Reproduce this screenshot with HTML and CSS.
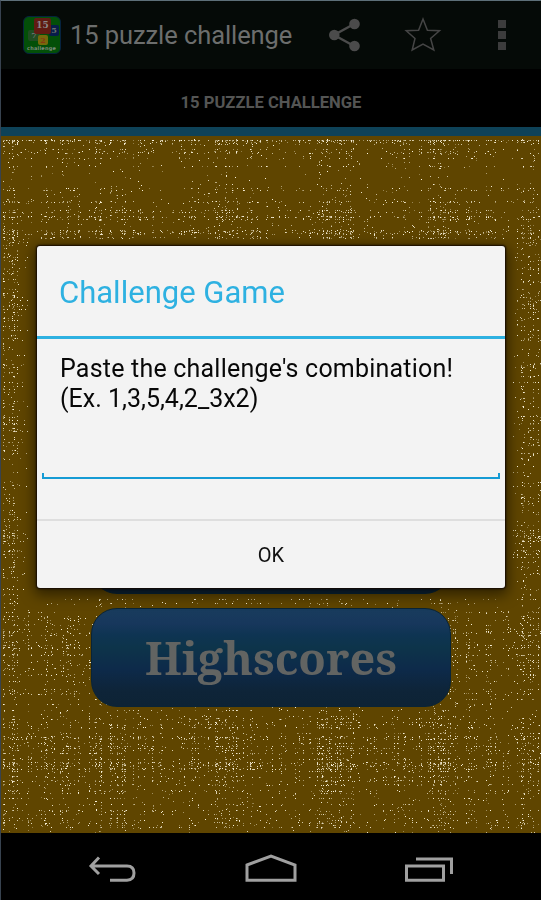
FILE: index.html
```
<!DOCTYPE html>
<html lang="en">

<head>
  <meta charset="UTF-8">
  <title>15 puzzle challenge</title>
  <meta name="viewport" content="width=device-width, initial-scale=1">
  <link rel="stylesheet" href="styles.css">
</head>

<body>
  <div class="screen">
    <header>
      <div class="app-icon">
        <span class="tile green">7</span>
        <span class="tile blue">5</span>
        <span class="tile yellow">2</span>
        <span class="tile red">15</span>
        <span class="icon-label">challenge</span>
      </div>
      <div class="app-title">15 puzzle challenge</div>
      <svg class="share" width="32" height="34" viewBox="0 0 32 34">
        <path d="M26 5.500L5 17L26 28.500" fill="none" stroke="#4b4b4b" stroke-width="2.400" />
        <g fill="#4b4b4b">
          <circle cx="25.500" cy="6" r="5.300" />
          <circle cx="5.300" cy="17" r="5.300" />
          <circle cx="25.500" cy="28" r="5.300" />
        </g>
      </svg>
      <svg class="star" width="38" height="38" viewBox="0 0 38 38">
        <path d="M19 3L23.400 14.200L35.500 14.700L26.600 22.500L29.800 34L19 28L8.200 34L11 22.500L2.200 14.700L14.600 14.200Z" fill="none" stroke="#454545" stroke-width="1.500" />
      </svg>
      <div class="more"><i></i><i></i><i></i></div>
    </header>
    <div class="tab">15 PUZZLE CHALLENGE</div>
    <main>
      <canvas id="texture" width="540" height="697"></canvas>
      <div class="menu">
        <button class="menu-button"></button>
        <button class="menu-button">Highscores</button>
      </div>
    </main>
    <nav>
      <svg width="50" height="30" viewBox="0 0 50 30">
        <path d="M12 3.500L4 12L12 20M4 12H40Q47 12 47 19T40 26.300H23" />
      </svg>
      <svg width="54" height="30" viewBox="0 0 54 30">
        <path d="M3 11L27 2L51 11V26.300H3Z" />
      </svg>
      <svg width="50" height="30" viewBox="0 0 50 30">
        <path d="M2.500 12H39.500V26.300H2.500ZM12 5H47.500V20" />
      </svg>
    </nav>
  </div>

  <div class="dialog">
    <h1>Challenge Game</h1>
    <div class="dialog-body">
      <p class="first">Paste the challenge's combination!</p>
      <p>(Ex. 1,3,5,4,2_3x2)</p>
      <input type="text" id="combination">
    </div>
    <button class="ok">OK</button>
  </div>

  <script>
    const canvas = document.getElementById('texture');
    const ctx = canvas.getContext('2d');
    const period = 107;
    let seed = 15;

    function random() {
      seed = (seed * 1664525 + 1013904223) % 4294967296;
      return seed / 4294967296;
    }

    // Some threads of the weave are much brighter than others
    function threads(count, center) {
      const list = [];
      for (let i = 0; i < count; i++) {
        const wave = 0.5 + 0.5 * Math.cos((i - center) / period * Math.PI * 2);
        const bright = random() < 0.3 ? 2.2 : 0.3;
        list.push(bright * (0.6 + Math.pow(wave, 3) * 0.5));
      }
      return list;
    }

    const cols = threads(540, 7);
    const rows = threads(697, 84);
    rows[4] = 8;

    for (let y = 3; y < 697; y++) {
      for (let x = 2; x < 540; x++) {
        if (random() < rows[y] * cols[x] * 0.095) {
          ctx.fillStyle = 'rgba(255, 248, 225, ' + (0.3 + random() * 0.7) + ')';
          ctx.fillRect(x, y, 1, 1);
        }
      }
    }

    // Keep the dialog's shadow free of specks
    ctx.clearRect(27, 103, 485, 360);
  </script>
</body>

</html>
```
FILE: styles.css
```
body {
  margin: 0;
  font-family: Roboto, sans-serif;
  background: #000;
  overflow: hidden;
}

.screen {
  display: flex;
  flex-direction: column;
  box-sizing: border-box;
  width: 541px;
  height: 900px;
  border-top: 1px solid #5d6f78;
  border-left: 1px solid #37424f;
}

header {
  display: flex;
  align-items: center;
  box-sizing: border-box;
  height: 68px;
  padding-left: 22px;
  background: #050a07;
}

.app-icon {
  position: relative;
  box-sizing: border-box;
  width: 38px;
  height: 38px;
  border: 1px solid #06233f;
  border-radius: 6px;
  background: #034f08;
}

.tile {
  position: absolute;
  border-radius: 2px;
  font: bold 8px/11px "DejaVu Serif", serif;
  text-align: center;
  color: #67706a;
}

.tile.red {
  left: 10px;
  top: 1px;
  width: 17px;
  height: 16px;
  line-height: 15px;
  font-size: 9px;
  color: #888;
  background: #601b12;
}

.tile.blue {
  left: 25px;
  top: 8px;
  width: 10px;
  height: 11px;
  background: #071d4a;
}

.tile.green {
  left: 4px;
  top: 13px;
  width: 12px;
  height: 11px;
  background: #204c22;
}

.tile.yellow {
  left: 14px;
  top: 18px;
  width: 10px;
  height: 10px;
  line-height: 10px;
  color: #853a10;
  background: #75690b;
}

.icon-label {
  position: absolute;
  left: 3px;
  top: 28px;
  font: bold 5px/7px "DejaVu Sans", sans-serif;
  letter-spacing: 0.2px;
  color: #7d8a7d;
}

.app-title {
  width: 226px;
  margin-left: 9px;
  font-size: 25.5px;
  letter-spacing: -0.08px;
  white-space: nowrap;
  color: #6c6e6d;
}

.share {
  margin-left: 33px;
}

.star {
  margin-left: 43px;
}

.more {
  display: flex;
  flex-direction: column;
  gap: 3px;
  margin-left: 56px;
}

.more i {
  width: 8px;
  height: 8px;
  background: #3c3c3c;
}

.tab {
  height: 58px;
  border-bottom: 9px solid #0e4258;
  background: #000;
  color: #545554;
  font-size: 16.6px;
  font-weight: bold;
  line-height: 67px;
  text-align: center;
}

main {
  position: relative;
  height: 697px;
  background: #5f4500;
}

#texture {
  position: absolute;
  left: 0;
  top: 0;
}

.menu {
  position: relative;
  display: flex;
  flex-direction: column;
  align-items: center;
  gap: 14px;
  padding-top: 359px;
}

.menu-button {
  width: 360px;
  height: 99px;
  padding: 0;
  border: 1px solid #092437;
  border-radius: 26px;
  background: linear-gradient(#183c5d, #17375c 15%, #0e3452 27%, #0d344a 40%, #0d2a4a 62%, #0e2438 85%, #0d2335);
  color: #626462;
  font: bold 45px "Noto Serif", "DejaVu Serif Condensed", "DejaVu Serif", serif;
}

nav {
  display: flex;
  align-items: center;
  justify-content: space-between;
  height: 67px;
  padding: 4px 87px 0 86px;
  box-sizing: border-box;
}

nav path {
  fill: none;
  stroke: #a0a0a0;
  stroke-width: 3;
}

.dialog {
  position: absolute;
  left: 37px;
  top: 246px;
  width: 468px;
  height: 342px;
  border-radius: 3px;
  background: #f3f3f3;
  box-shadow: 0 0 2px 1px #120800, 0 4px 13px 3px rgba(0, 0, 0, 0.5);
}

h1 {
  height: 90px;
  margin: 0;
  padding-left: 22px;
  border-bottom: 3px solid #2eb1e1;
  color: #2eb1e1;
  font-size: 31px;
  font-weight: normal;
  line-height: 93px;
}

.dialog-body {
  box-sizing: border-box;
  height: 180px;
  padding: 15px 5px 0;
}

.dialog-body p {
  margin: 0 0 0 18px;
  font-size: 25px;
  line-height: 30px;
  white-space: nowrap;
  color: #080808;
}

.dialog-body .first {
  letter-spacing: 0.21px;
}

#combination {
  display: block;
  box-sizing: border-box;
  width: 458px;
  height: 6px;
  margin-top: 59px;
  padding: 0;
  border: 2px solid #159bd4;
  border-top: none;
  background: none;
  outline: none;
}

.ok {
  display: block;
  width: 100%;
  height: 69px;
  padding: 1px 0 0;
  border: none;
  border-top: 2px solid #dedede;
  background: none;
  color: #111;
  font: 20px Roboto, sans-serif;
}
```
